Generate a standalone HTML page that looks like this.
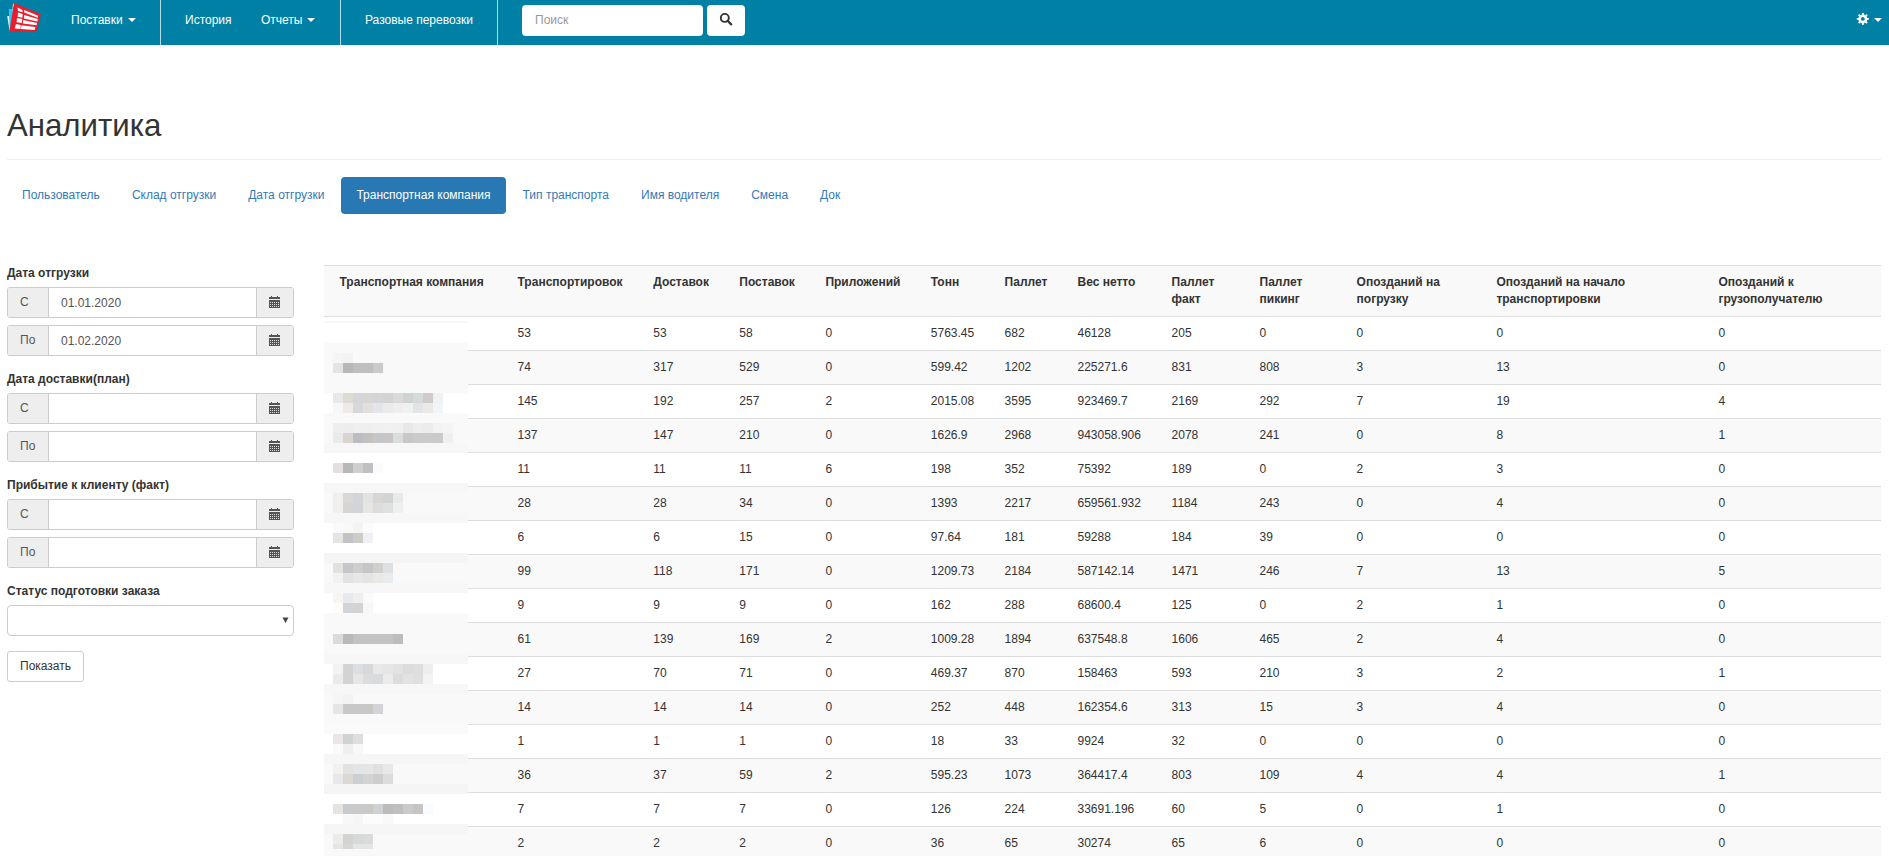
<!DOCTYPE html>
<html><head><meta charset="utf-8"><style>
*{box-sizing:border-box;}
html,body{margin:0;padding:0;background:#fff;}
body{font-family:"Liberation Sans",sans-serif;font-size:12px;line-height:17px;color:#333;width:1889px;height:856px;overflow:hidden;position:relative;}
.nav{position:absolute;left:0;top:0;width:1889px;height:45px;background:#0080a5;}
.nav .t{position:absolute;top:0;height:45px;line-height:41px;color:#fff;font-size:12px;white-space:nowrap;}
.sep{position:absolute;top:0;width:1px;height:45px;background:#b2dce7;}
.caret{display:inline-block;width:0;height:0;border-top:4px solid #fff;border-left:4px solid transparent;border-right:4px solid transparent;vertical-align:middle;margin-left:5px;position:relative;top:-1px;}
.search{position:absolute;left:522px;top:5px;width:181px;height:31px;background:#fff;border-radius:4px;color:#999;padding-left:13px;line-height:30px;font-size:12px;}
.sbtn{position:absolute;left:707px;top:5px;width:38px;height:31px;background:#fff;border-radius:4px;}
h1{position:absolute;left:7px;top:106px;margin:0;font-size:31.2px;font-weight:normal;line-height:40px;color:#333;white-space:nowrap;}
.hr{position:absolute;left:7px;top:159px;width:1874px;height:1px;background:#eee;}
.pills{position:absolute;left:7px;top:177px;height:37px;white-space:nowrap;font-size:0;}
.pill{display:inline-block;height:37px;line-height:37px;font-size:12px;color:#337ab7;padding:0 15px;border-radius:4px;margin-right:2px;}
.pill.act{background:#2878b4;color:#fff;}
.lbl{position:absolute;left:7px;font-weight:bold;white-space:nowrap;line-height:17px;}
.ig{position:absolute;left:7px;width:287px;height:31px;border:1px solid #ccc;border-radius:3px;background:#fff;}
.ig .a1{position:absolute;left:0;top:0;width:41px;height:29px;background:#eee;border-right:1px solid #ccc;border-radius:2px 0 0 2px;padding-left:12px;line-height:29px;color:#555;}
.ig .a2{position:absolute;right:0;top:0;width:37px;height:29px;background:#eee;border-left:1px solid #ccc;border-radius:0 2px 2px 0;}
.ig .v{position:absolute;left:53px;top:1px;line-height:29px;color:#555;}
.cal{position:absolute;left:12px;top:8px;}
.sel{position:absolute;left:7px;top:605px;width:287px;height:31px;border:1px solid #ccc;border-radius:4px;background:#fff;}
.btn{position:absolute;left:7px;top:651px;width:77px;height:31px;border:1px solid #ccc;border-radius:3px;background:#fff;line-height:29px;padding-left:12px;color:#333;}
.thd{position:absolute;left:324px;top:265px;width:1557px;height:52px;background:#f9f9f9;border-top:1px solid #ddd;border-bottom:1px solid #ddd;}
.row{position:absolute;left:324px;width:1557px;height:35px;border-top:1px solid #ddd;background:#fff;}
.row.s{background:#f9f9f9;}
.c{position:absolute;top:8px;line-height:17px;white-space:nowrap;}
.thd .c{font-weight:bold;}
</style></head><body>
<div class="nav"><svg style="position:absolute;left:0;top:0" width="50" height="45" viewBox="0 0 50 45">
<polygon points="7.2,16.2 10.3,15.8 10.6,30.5 9.6,30.5" fill="#f4fbfd"/>
<polygon points="8.8,8.8 14,9.6 10.2,31.2 9.8,31.2" fill="#29c8f2"/>
<polygon points="13.2,3.9 14.3,3.2 12.5,12 12.6,6" fill="#d9f3fa"/>
<polygon points="14.1,3.1 40.7,13.9 36.1,32.1 9.4,31.4" fill="#ec1c2c"/>
<polygon points="17.5,7.6 22.5,9.9 22.5,12.2 18.1,10.9" fill="#fff"/>
<polygon points="17.9,12.6 22.7,14.1 22.5,17.7 17.7,16.8" fill="#fff"/>
<polygon points="17,18.1 22.3,19.1 21.9,23.1 16.6,22.3" fill="#fff"/>
<polygon points="16,24 20.8,25 20.4,29 14.7,28.6" fill="#fff"/>
<polygon points="24.2,10.1 38.1,15.7 37.6,17.7 24.2,12.6" fill="#fff"/>
<polygon points="24.2,14.9 37.9,19.1 37.4,21.4 24,18.4" fill="#fff"/>
<polygon points="23.2,20 37.1,22.9 36.6,25.2 22.9,23.5" fill="#fff"/>
<polygon points="21.5,25.2 35.3,26.9 34.7,30 20.8,29" fill="#fff"/>
</svg>
<div class="t" style="left:71px">Поставки<span class="caret"></span></div>
<div class="sep" style="left:160px"></div>
<div class="t" style="left:185px">История</div>
<div class="t" style="left:261px">Отчеты<span class="caret"></span></div>
<div class="sep" style="left:340px"></div>
<div class="t" style="left:365px">Разовые перевозки</div>
<div class="sep" style="left:497px"></div>
<div class="search">Поиск</div>
<div class="sbtn"><svg style="position:absolute;left:0;top:0" width="38" height="31" viewBox="0 0 38 31"><circle cx="17.8" cy="12.9" r="4" fill="none" stroke="#333" stroke-width="1.9"/><line x1="20.6" y1="15.8" x2="24.2" y2="19.4" stroke="#333" stroke-width="2.2" stroke-linecap="round"/></svg></div><svg style="position:absolute;left:1850px;top:7px" width="24" height="24" viewBox="-12 -12 24 24"><g transform="translate(0.85,-0.1)"><circle r="4.5" fill="#fff"/><rect x="-0.9" y="-6" width="1.8" height="3" transform="rotate(0)" fill="#fff"/><rect x="-0.9" y="-6" width="1.8" height="3" transform="rotate(45)" fill="#fff"/><rect x="-0.9" y="-6" width="1.8" height="3" transform="rotate(90)" fill="#fff"/><rect x="-0.9" y="-6" width="1.8" height="3" transform="rotate(135)" fill="#fff"/><rect x="-0.9" y="-6" width="1.8" height="3" transform="rotate(180)" fill="#fff"/><rect x="-0.9" y="-6" width="1.8" height="3" transform="rotate(225)" fill="#fff"/><rect x="-0.9" y="-6" width="1.8" height="3" transform="rotate(270)" fill="#fff"/><rect x="-0.9" y="-6" width="1.8" height="3" transform="rotate(315)" fill="#fff"/><circle r="1.9" fill="#0080a5"/></g></svg><span class="caret" style="position:absolute;left:1874px;top:18px;margin:0;vertical-align:top"></span>
</div>
<h1>Аналитика</h1><div class="hr"></div>
<div class="pills"><span class="pill">Пользователь</span><span class="pill">Склад отгрузки</span><span class="pill">Дата отгрузки</span><span class="pill act">Транспортная компания</span><span class="pill">Тип транспорта</span><span class="pill">Имя водителя</span><span class="pill">Смена</span><span class="pill">Док</span></div>
<div class="lbl" style="top:265px">Дата отгрузки</div>
<div class="ig" style="top:287px"><div class="a1">С</div><div class="v">01.01.2020</div><div class="a2"><svg class="cal" width="11" height="12" viewBox="0 0 11 12" shape-rendering="crispEdges"><rect x="2" y="0" width="1" height="1" fill="#555"/><rect x="8" y="0" width="1" height="1" fill="#555"/><rect x="0" y="1" width="11" height="2" fill="#555"/><rect x="0" y="4" width="11" height="8" fill="#555"/><rect x="1" y="6" width="1" height="1" fill="#d8d8d8"/><rect x="3" y="6" width="1" height="1" fill="#d8d8d8"/><rect x="5" y="6" width="1" height="1" fill="#d8d8d8"/><rect x="7" y="6" width="1" height="1" fill="#d8d8d8"/><rect x="9" y="6" width="1" height="1" fill="#d8d8d8"/><rect x="1" y="8" width="1" height="1" fill="#d8d8d8"/><rect x="3" y="8" width="1" height="1" fill="#d8d8d8"/><rect x="5" y="8" width="1" height="1" fill="#d8d8d8"/><rect x="7" y="8" width="1" height="1" fill="#d8d8d8"/><rect x="9" y="8" width="1" height="1" fill="#d8d8d8"/><rect x="1" y="10" width="1" height="1" fill="#d8d8d8"/><rect x="3" y="10" width="1" height="1" fill="#d8d8d8"/><rect x="5" y="10" width="1" height="1" fill="#d8d8d8"/><rect x="7" y="10" width="1" height="1" fill="#d8d8d8"/><rect x="9" y="10" width="1" height="1" fill="#d8d8d8"/></svg></div></div>
<div class="ig" style="top:325px"><div class="a1">По</div><div class="v">01.02.2020</div><div class="a2"><svg class="cal" width="11" height="12" viewBox="0 0 11 12" shape-rendering="crispEdges"><rect x="2" y="0" width="1" height="1" fill="#555"/><rect x="8" y="0" width="1" height="1" fill="#555"/><rect x="0" y="1" width="11" height="2" fill="#555"/><rect x="0" y="4" width="11" height="8" fill="#555"/><rect x="1" y="6" width="1" height="1" fill="#d8d8d8"/><rect x="3" y="6" width="1" height="1" fill="#d8d8d8"/><rect x="5" y="6" width="1" height="1" fill="#d8d8d8"/><rect x="7" y="6" width="1" height="1" fill="#d8d8d8"/><rect x="9" y="6" width="1" height="1" fill="#d8d8d8"/><rect x="1" y="8" width="1" height="1" fill="#d8d8d8"/><rect x="3" y="8" width="1" height="1" fill="#d8d8d8"/><rect x="5" y="8" width="1" height="1" fill="#d8d8d8"/><rect x="7" y="8" width="1" height="1" fill="#d8d8d8"/><rect x="9" y="8" width="1" height="1" fill="#d8d8d8"/><rect x="1" y="10" width="1" height="1" fill="#d8d8d8"/><rect x="3" y="10" width="1" height="1" fill="#d8d8d8"/><rect x="5" y="10" width="1" height="1" fill="#d8d8d8"/><rect x="7" y="10" width="1" height="1" fill="#d8d8d8"/><rect x="9" y="10" width="1" height="1" fill="#d8d8d8"/></svg></div></div>
<div class="lbl" style="top:371px">Дата доставки(план)</div>
<div class="ig" style="top:393px"><div class="a1">С</div><div class="v"></div><div class="a2"><svg class="cal" width="11" height="12" viewBox="0 0 11 12" shape-rendering="crispEdges"><rect x="2" y="0" width="1" height="1" fill="#555"/><rect x="8" y="0" width="1" height="1" fill="#555"/><rect x="0" y="1" width="11" height="2" fill="#555"/><rect x="0" y="4" width="11" height="8" fill="#555"/><rect x="1" y="6" width="1" height="1" fill="#d8d8d8"/><rect x="3" y="6" width="1" height="1" fill="#d8d8d8"/><rect x="5" y="6" width="1" height="1" fill="#d8d8d8"/><rect x="7" y="6" width="1" height="1" fill="#d8d8d8"/><rect x="9" y="6" width="1" height="1" fill="#d8d8d8"/><rect x="1" y="8" width="1" height="1" fill="#d8d8d8"/><rect x="3" y="8" width="1" height="1" fill="#d8d8d8"/><rect x="5" y="8" width="1" height="1" fill="#d8d8d8"/><rect x="7" y="8" width="1" height="1" fill="#d8d8d8"/><rect x="9" y="8" width="1" height="1" fill="#d8d8d8"/><rect x="1" y="10" width="1" height="1" fill="#d8d8d8"/><rect x="3" y="10" width="1" height="1" fill="#d8d8d8"/><rect x="5" y="10" width="1" height="1" fill="#d8d8d8"/><rect x="7" y="10" width="1" height="1" fill="#d8d8d8"/><rect x="9" y="10" width="1" height="1" fill="#d8d8d8"/></svg></div></div>
<div class="ig" style="top:431px"><div class="a1">По</div><div class="v"></div><div class="a2"><svg class="cal" width="11" height="12" viewBox="0 0 11 12" shape-rendering="crispEdges"><rect x="2" y="0" width="1" height="1" fill="#555"/><rect x="8" y="0" width="1" height="1" fill="#555"/><rect x="0" y="1" width="11" height="2" fill="#555"/><rect x="0" y="4" width="11" height="8" fill="#555"/><rect x="1" y="6" width="1" height="1" fill="#d8d8d8"/><rect x="3" y="6" width="1" height="1" fill="#d8d8d8"/><rect x="5" y="6" width="1" height="1" fill="#d8d8d8"/><rect x="7" y="6" width="1" height="1" fill="#d8d8d8"/><rect x="9" y="6" width="1" height="1" fill="#d8d8d8"/><rect x="1" y="8" width="1" height="1" fill="#d8d8d8"/><rect x="3" y="8" width="1" height="1" fill="#d8d8d8"/><rect x="5" y="8" width="1" height="1" fill="#d8d8d8"/><rect x="7" y="8" width="1" height="1" fill="#d8d8d8"/><rect x="9" y="8" width="1" height="1" fill="#d8d8d8"/><rect x="1" y="10" width="1" height="1" fill="#d8d8d8"/><rect x="3" y="10" width="1" height="1" fill="#d8d8d8"/><rect x="5" y="10" width="1" height="1" fill="#d8d8d8"/><rect x="7" y="10" width="1" height="1" fill="#d8d8d8"/><rect x="9" y="10" width="1" height="1" fill="#d8d8d8"/></svg></div></div>
<div class="lbl" style="top:477px">Прибытие к клиенту (факт)</div>
<div class="ig" style="top:499px"><div class="a1">С</div><div class="v"></div><div class="a2"><svg class="cal" width="11" height="12" viewBox="0 0 11 12" shape-rendering="crispEdges"><rect x="2" y="0" width="1" height="1" fill="#555"/><rect x="8" y="0" width="1" height="1" fill="#555"/><rect x="0" y="1" width="11" height="2" fill="#555"/><rect x="0" y="4" width="11" height="8" fill="#555"/><rect x="1" y="6" width="1" height="1" fill="#d8d8d8"/><rect x="3" y="6" width="1" height="1" fill="#d8d8d8"/><rect x="5" y="6" width="1" height="1" fill="#d8d8d8"/><rect x="7" y="6" width="1" height="1" fill="#d8d8d8"/><rect x="9" y="6" width="1" height="1" fill="#d8d8d8"/><rect x="1" y="8" width="1" height="1" fill="#d8d8d8"/><rect x="3" y="8" width="1" height="1" fill="#d8d8d8"/><rect x="5" y="8" width="1" height="1" fill="#d8d8d8"/><rect x="7" y="8" width="1" height="1" fill="#d8d8d8"/><rect x="9" y="8" width="1" height="1" fill="#d8d8d8"/><rect x="1" y="10" width="1" height="1" fill="#d8d8d8"/><rect x="3" y="10" width="1" height="1" fill="#d8d8d8"/><rect x="5" y="10" width="1" height="1" fill="#d8d8d8"/><rect x="7" y="10" width="1" height="1" fill="#d8d8d8"/><rect x="9" y="10" width="1" height="1" fill="#d8d8d8"/></svg></div></div>
<div class="ig" style="top:537px"><div class="a1">По</div><div class="v"></div><div class="a2"><svg class="cal" width="11" height="12" viewBox="0 0 11 12" shape-rendering="crispEdges"><rect x="2" y="0" width="1" height="1" fill="#555"/><rect x="8" y="0" width="1" height="1" fill="#555"/><rect x="0" y="1" width="11" height="2" fill="#555"/><rect x="0" y="4" width="11" height="8" fill="#555"/><rect x="1" y="6" width="1" height="1" fill="#d8d8d8"/><rect x="3" y="6" width="1" height="1" fill="#d8d8d8"/><rect x="5" y="6" width="1" height="1" fill="#d8d8d8"/><rect x="7" y="6" width="1" height="1" fill="#d8d8d8"/><rect x="9" y="6" width="1" height="1" fill="#d8d8d8"/><rect x="1" y="8" width="1" height="1" fill="#d8d8d8"/><rect x="3" y="8" width="1" height="1" fill="#d8d8d8"/><rect x="5" y="8" width="1" height="1" fill="#d8d8d8"/><rect x="7" y="8" width="1" height="1" fill="#d8d8d8"/><rect x="9" y="8" width="1" height="1" fill="#d8d8d8"/><rect x="1" y="10" width="1" height="1" fill="#d8d8d8"/><rect x="3" y="10" width="1" height="1" fill="#d8d8d8"/><rect x="5" y="10" width="1" height="1" fill="#d8d8d8"/><rect x="7" y="10" width="1" height="1" fill="#d8d8d8"/><rect x="9" y="10" width="1" height="1" fill="#d8d8d8"/></svg></div></div>
<div class="lbl" style="top:583px">Статус подготовки заказа</div>
<div class="sel"><svg style="position:absolute;left:274px;top:11px" width="7" height="7" viewBox="0 0 7 7"><polygon points="0.5,0.5 6.5,0.5 3.5,6" fill="#444"/></svg></div>
<div class="btn">Показать</div>
<div class="thd"><div class="c" style="left:15.5px">Транспортная компания</div><div class="c" style="left:193.5px">Транспортировок</div><div class="c" style="left:329.3px">Доставок</div><div class="c" style="left:415.3px">Поставок</div><div class="c" style="left:501.4px">Приложений</div><div class="c" style="left:606.8px">Тонн</div><div class="c" style="left:680.6px">Паллет</div><div class="c" style="left:753.5px">Вес нетто</div><div class="c" style="left:847.6px">Паллет<br>факт</div><div class="c" style="left:935.5px">Паллет<br>пикинг</div><div class="c" style="left:1032.6px">Опозданий на<br>погрузку</div><div class="c" style="left:1172.4px">Опозданий на начало<br>транспортировки</div><div class="c" style="left:1394.4px">Опозданий к<br>грузополучателю</div></div>
<div class="row" style="top:316px"><div class="c" style="left:193.5px">53</div><div class="c" style="left:329.3px">53</div><div class="c" style="left:415.3px">58</div><div class="c" style="left:501.4px">0</div><div class="c" style="left:606.8px">5763.45</div><div class="c" style="left:680.6px">682</div><div class="c" style="left:753.5px">46128</div><div class="c" style="left:847.6px">205</div><div class="c" style="left:935.5px">0</div><div class="c" style="left:1032.6px">0</div><div class="c" style="left:1172.4px">0</div><div class="c" style="left:1394.4px">0</div></div>
<div class="row s" style="top:350px"><div class="c" style="left:193.5px">74</div><div class="c" style="left:329.3px">317</div><div class="c" style="left:415.3px">529</div><div class="c" style="left:501.4px">0</div><div class="c" style="left:606.8px">599.42</div><div class="c" style="left:680.6px">1202</div><div class="c" style="left:753.5px">225271.6</div><div class="c" style="left:847.6px">831</div><div class="c" style="left:935.5px">808</div><div class="c" style="left:1032.6px">3</div><div class="c" style="left:1172.4px">13</div><div class="c" style="left:1394.4px">0</div></div>
<div class="row" style="top:384px"><div class="c" style="left:193.5px">145</div><div class="c" style="left:329.3px">192</div><div class="c" style="left:415.3px">257</div><div class="c" style="left:501.4px">2</div><div class="c" style="left:606.8px">2015.08</div><div class="c" style="left:680.6px">3595</div><div class="c" style="left:753.5px">923469.7</div><div class="c" style="left:847.6px">2169</div><div class="c" style="left:935.5px">292</div><div class="c" style="left:1032.6px">7</div><div class="c" style="left:1172.4px">19</div><div class="c" style="left:1394.4px">4</div></div>
<div class="row s" style="top:418px"><div class="c" style="left:193.5px">137</div><div class="c" style="left:329.3px">147</div><div class="c" style="left:415.3px">210</div><div class="c" style="left:501.4px">0</div><div class="c" style="left:606.8px">1626.9</div><div class="c" style="left:680.6px">2968</div><div class="c" style="left:753.5px">943058.906</div><div class="c" style="left:847.6px">2078</div><div class="c" style="left:935.5px">241</div><div class="c" style="left:1032.6px">0</div><div class="c" style="left:1172.4px">8</div><div class="c" style="left:1394.4px">1</div></div>
<div class="row" style="top:452px"><div class="c" style="left:193.5px">11</div><div class="c" style="left:329.3px">11</div><div class="c" style="left:415.3px">11</div><div class="c" style="left:501.4px">6</div><div class="c" style="left:606.8px">198</div><div class="c" style="left:680.6px">352</div><div class="c" style="left:753.5px">75392</div><div class="c" style="left:847.6px">189</div><div class="c" style="left:935.5px">0</div><div class="c" style="left:1032.6px">2</div><div class="c" style="left:1172.4px">3</div><div class="c" style="left:1394.4px">0</div></div>
<div class="row s" style="top:486px"><div class="c" style="left:193.5px">28</div><div class="c" style="left:329.3px">28</div><div class="c" style="left:415.3px">34</div><div class="c" style="left:501.4px">0</div><div class="c" style="left:606.8px">1393</div><div class="c" style="left:680.6px">2217</div><div class="c" style="left:753.5px">659561.932</div><div class="c" style="left:847.6px">1184</div><div class="c" style="left:935.5px">243</div><div class="c" style="left:1032.6px">0</div><div class="c" style="left:1172.4px">4</div><div class="c" style="left:1394.4px">0</div></div>
<div class="row" style="top:520px"><div class="c" style="left:193.5px">6</div><div class="c" style="left:329.3px">6</div><div class="c" style="left:415.3px">15</div><div class="c" style="left:501.4px">0</div><div class="c" style="left:606.8px">97.64</div><div class="c" style="left:680.6px">181</div><div class="c" style="left:753.5px">59288</div><div class="c" style="left:847.6px">184</div><div class="c" style="left:935.5px">39</div><div class="c" style="left:1032.6px">0</div><div class="c" style="left:1172.4px">0</div><div class="c" style="left:1394.4px">0</div></div>
<div class="row s" style="top:554px"><div class="c" style="left:193.5px">99</div><div class="c" style="left:329.3px">118</div><div class="c" style="left:415.3px">171</div><div class="c" style="left:501.4px">0</div><div class="c" style="left:606.8px">1209.73</div><div class="c" style="left:680.6px">2184</div><div class="c" style="left:753.5px">587142.14</div><div class="c" style="left:847.6px">1471</div><div class="c" style="left:935.5px">246</div><div class="c" style="left:1032.6px">7</div><div class="c" style="left:1172.4px">13</div><div class="c" style="left:1394.4px">5</div></div>
<div class="row" style="top:588px"><div class="c" style="left:193.5px">9</div><div class="c" style="left:329.3px">9</div><div class="c" style="left:415.3px">9</div><div class="c" style="left:501.4px">0</div><div class="c" style="left:606.8px">162</div><div class="c" style="left:680.6px">288</div><div class="c" style="left:753.5px">68600.4</div><div class="c" style="left:847.6px">125</div><div class="c" style="left:935.5px">0</div><div class="c" style="left:1032.6px">2</div><div class="c" style="left:1172.4px">1</div><div class="c" style="left:1394.4px">0</div></div>
<div class="row s" style="top:622px"><div class="c" style="left:193.5px">61</div><div class="c" style="left:329.3px">139</div><div class="c" style="left:415.3px">169</div><div class="c" style="left:501.4px">2</div><div class="c" style="left:606.8px">1009.28</div><div class="c" style="left:680.6px">1894</div><div class="c" style="left:753.5px">637548.8</div><div class="c" style="left:847.6px">1606</div><div class="c" style="left:935.5px">465</div><div class="c" style="left:1032.6px">2</div><div class="c" style="left:1172.4px">4</div><div class="c" style="left:1394.4px">0</div></div>
<div class="row" style="top:656px"><div class="c" style="left:193.5px">27</div><div class="c" style="left:329.3px">70</div><div class="c" style="left:415.3px">71</div><div class="c" style="left:501.4px">0</div><div class="c" style="left:606.8px">469.37</div><div class="c" style="left:680.6px">870</div><div class="c" style="left:753.5px">158463</div><div class="c" style="left:847.6px">593</div><div class="c" style="left:935.5px">210</div><div class="c" style="left:1032.6px">3</div><div class="c" style="left:1172.4px">2</div><div class="c" style="left:1394.4px">1</div></div>
<div class="row s" style="top:690px"><div class="c" style="left:193.5px">14</div><div class="c" style="left:329.3px">14</div><div class="c" style="left:415.3px">14</div><div class="c" style="left:501.4px">0</div><div class="c" style="left:606.8px">252</div><div class="c" style="left:680.6px">448</div><div class="c" style="left:753.5px">162354.6</div><div class="c" style="left:847.6px">313</div><div class="c" style="left:935.5px">15</div><div class="c" style="left:1032.6px">3</div><div class="c" style="left:1172.4px">4</div><div class="c" style="left:1394.4px">0</div></div>
<div class="row" style="top:724px"><div class="c" style="left:193.5px">1</div><div class="c" style="left:329.3px">1</div><div class="c" style="left:415.3px">1</div><div class="c" style="left:501.4px">0</div><div class="c" style="left:606.8px">18</div><div class="c" style="left:680.6px">33</div><div class="c" style="left:753.5px">9924</div><div class="c" style="left:847.6px">32</div><div class="c" style="left:935.5px">0</div><div class="c" style="left:1032.6px">0</div><div class="c" style="left:1172.4px">0</div><div class="c" style="left:1394.4px">0</div></div>
<div class="row s" style="top:758px"><div class="c" style="left:193.5px">36</div><div class="c" style="left:329.3px">37</div><div class="c" style="left:415.3px">59</div><div class="c" style="left:501.4px">2</div><div class="c" style="left:606.8px">595.23</div><div class="c" style="left:680.6px">1073</div><div class="c" style="left:753.5px">364417.4</div><div class="c" style="left:847.6px">803</div><div class="c" style="left:935.5px">109</div><div class="c" style="left:1032.6px">4</div><div class="c" style="left:1172.4px">4</div><div class="c" style="left:1394.4px">1</div></div>
<div class="row" style="top:792px"><div class="c" style="left:193.5px">7</div><div class="c" style="left:329.3px">7</div><div class="c" style="left:415.3px">7</div><div class="c" style="left:501.4px">0</div><div class="c" style="left:606.8px">126</div><div class="c" style="left:680.6px">224</div><div class="c" style="left:753.5px">33691.196</div><div class="c" style="left:847.6px">60</div><div class="c" style="left:935.5px">5</div><div class="c" style="left:1032.6px">0</div><div class="c" style="left:1172.4px">1</div><div class="c" style="left:1394.4px">0</div></div>
<div class="row s" style="top:826px"><div class="c" style="left:193.5px">2</div><div class="c" style="left:329.3px">2</div><div class="c" style="left:415.3px">2</div><div class="c" style="left:501.4px">0</div><div class="c" style="left:606.8px">36</div><div class="c" style="left:680.6px">65</div><div class="c" style="left:753.5px">30274</div><div class="c" style="left:847.6px">65</div><div class="c" style="left:935.5px">6</div><div class="c" style="left:1032.6px">0</div><div class="c" style="left:1172.4px">0</div><div class="c" style="left:1394.4px">0</div></div>
<div style="position:absolute;left:324px;top:0;width:144px;height:856px;"><div style="position:absolute;left:0;top:316px;width:144px;height:1px;background:#dddddd"></div><div style="position:absolute;left:0;top:317px;width:144px;height:4px;background:#ffffff"></div><div style="position:absolute;left:0;top:321px;width:144px;height:2px;background:#f9f9f9"></div><div style="position:absolute;left:0;top:323px;width:144px;height:20px;background:#ffffff"></div><div style="position:absolute;left:0;top:343px;width:144px;height:50px;background:#f9f9f9"></div><div style="position:absolute;left:0;top:393px;width:144px;height:20px;background:#ffffff"></div><div style="position:absolute;left:0;top:413px;width:144px;height:30px;background:#f9f9f9"></div><div style="position:absolute;left:0;top:443px;width:144px;height:10px;background:#f7f7f7"></div><div style="position:absolute;left:0;top:453px;width:144px;height:30px;background:#ffffff"></div><div style="position:absolute;left:0;top:483px;width:144px;height:10px;background:#f7f7f7"></div><div style="position:absolute;left:0;top:493px;width:144px;height:20px;background:#f9f9f9"></div><div style="position:absolute;left:0;top:513px;width:144px;height:10px;background:#f7f7f7"></div><div style="position:absolute;left:0;top:523px;width:144px;height:30px;background:#ffffff"></div><div style="position:absolute;left:0;top:553px;width:144px;height:10px;background:#f5f5f5"></div><div style="position:absolute;left:0;top:563px;width:144px;height:20px;background:#f9f9f9"></div><div style="position:absolute;left:0;top:583px;width:144px;height:10px;background:#f7f7f7"></div><div style="position:absolute;left:0;top:593px;width:144px;height:20px;background:#ffffff"></div><div style="position:absolute;left:0;top:613px;width:144px;height:41px;background:#f9f9f9"></div><div style="position:absolute;left:0;top:654px;width:144px;height:10px;background:#f7f7f7"></div><div style="position:absolute;left:0;top:664px;width:144px;height:20px;background:#ffffff"></div><div style="position:absolute;left:0;top:684px;width:144px;height:10px;background:#f7f7f7"></div><div style="position:absolute;left:0;top:694px;width:144px;height:30px;background:#f9f9f9"></div><div style="position:absolute;left:0;top:724px;width:144px;height:10px;background:#fafafa"></div><div style="position:absolute;left:0;top:734px;width:144px;height:20px;background:#ffffff"></div><div style="position:absolute;left:0;top:754px;width:144px;height:10px;background:#f6f6f6"></div><div style="position:absolute;left:0;top:764px;width:144px;height:20px;background:#f9f9f9"></div><div style="position:absolute;left:0;top:784px;width:144px;height:10px;background:#f5f5f5"></div><div style="position:absolute;left:0;top:794px;width:144px;height:30px;background:#ffffff"></div><div style="position:absolute;left:0;top:824px;width:144px;height:10px;background:#f6f6f6"></div><div style="position:absolute;left:0;top:834px;width:144px;height:22px;background:#f9f9f9"></div><div style="position:absolute;left:9px;top:353px;width:10px;height:10px;background:#f5f5f5"></div><div style="position:absolute;left:19px;top:353px;width:10px;height:10px;background:#f3f3f3"></div><div style="position:absolute;left:9px;top:363px;width:10px;height:10px;background:#e6e4e2"></div><div style="position:absolute;left:19px;top:363px;width:10px;height:10px;background:#b8b8b8"></div><div style="position:absolute;left:29px;top:363px;width:10px;height:10px;background:#bfbfbf"></div><div style="position:absolute;left:39px;top:363px;width:10px;height:10px;background:#c0bfbd"></div><div style="position:absolute;left:49px;top:363px;width:10px;height:10px;background:#c8cbce"></div><div style="position:absolute;left:9px;top:393px;width:10px;height:10px;background:#e8e8e8"></div><div style="position:absolute;left:19px;top:393px;width:10px;height:10px;background:#dedbd7"></div><div style="position:absolute;left:29px;top:393px;width:10px;height:10px;background:#d5d6d9"></div><div style="position:absolute;left:39px;top:393px;width:10px;height:10px;background:#d8d5d3"></div><div style="position:absolute;left:49px;top:393px;width:10px;height:10px;background:#d5d5d8"></div><div style="position:absolute;left:59px;top:393px;width:10px;height:10px;background:#d3d3d3"></div><div style="position:absolute;left:69px;top:393px;width:10px;height:10px;background:#dcd9d8"></div><div style="position:absolute;left:79px;top:393px;width:10px;height:10px;background:#ced3d5"></div><div style="position:absolute;left:89px;top:393px;width:10px;height:10px;background:#d8dad9"></div><div style="position:absolute;left:99px;top:393px;width:10px;height:10px;background:#cfcbc8"></div><div style="position:absolute;left:109px;top:393px;width:10px;height:10px;background:#eef2f5"></div><div style="position:absolute;left:9px;top:403px;width:10px;height:10px;background:#f7f7f7"></div><div style="position:absolute;left:19px;top:403px;width:10px;height:10px;background:#eeece8"></div><div style="position:absolute;left:29px;top:403px;width:10px;height:10px;background:#d6d8dc"></div><div style="position:absolute;left:39px;top:403px;width:10px;height:10px;background:#e2e0dd"></div><div style="position:absolute;left:49px;top:403px;width:10px;height:10px;background:#e3e5ea"></div><div style="position:absolute;left:59px;top:403px;width:10px;height:10px;background:#ebebeb"></div><div style="position:absolute;left:69px;top:403px;width:10px;height:10px;background:#eeeeee"></div><div style="position:absolute;left:79px;top:403px;width:10px;height:10px;background:#f1f1f1"></div><div style="position:absolute;left:89px;top:403px;width:10px;height:10px;background:#e2e5e5"></div><div style="position:absolute;left:99px;top:403px;width:10px;height:10px;background:#ebe9e7"></div><div style="position:absolute;left:109px;top:403px;width:10px;height:10px;background:#f2f4f6"></div><div style="position:absolute;left:9px;top:423px;width:10px;height:10px;background:#eeeeee"></div><div style="position:absolute;left:19px;top:423px;width:10px;height:10px;background:#eceeed"></div><div style="position:absolute;left:29px;top:423px;width:10px;height:10px;background:#efefef"></div><div style="position:absolute;left:39px;top:423px;width:10px;height:10px;background:#efefef"></div><div style="position:absolute;left:49px;top:423px;width:10px;height:10px;background:#f0f0f0"></div><div style="position:absolute;left:59px;top:423px;width:10px;height:10px;background:#f1f1f1"></div><div style="position:absolute;left:69px;top:423px;width:10px;height:10px;background:#f0f0f0"></div><div style="position:absolute;left:79px;top:423px;width:10px;height:10px;background:#e6e8ea"></div><div style="position:absolute;left:89px;top:423px;width:10px;height:10px;background:#eeeeec"></div><div style="position:absolute;left:99px;top:423px;width:10px;height:10px;background:#ececec"></div><div style="position:absolute;left:109px;top:423px;width:10px;height:10px;background:#f3f3f3"></div><div style="position:absolute;left:119px;top:423px;width:10px;height:10px;background:#f5f5f5"></div><div style="position:absolute;left:9px;top:433px;width:10px;height:10px;background:#eaeaea"></div><div style="position:absolute;left:19px;top:433px;width:10px;height:10px;background:#d8d5cf"></div><div style="position:absolute;left:29px;top:433px;width:10px;height:10px;background:#bcbdc2"></div><div style="position:absolute;left:39px;top:433px;width:10px;height:10px;background:#c3c1bd"></div><div style="position:absolute;left:49px;top:433px;width:10px;height:10px;background:#c4c6ca"></div><div style="position:absolute;left:59px;top:433px;width:10px;height:10px;background:#c8c6c6"></div><div style="position:absolute;left:69px;top:433px;width:10px;height:10px;background:#dbdcde"></div><div style="position:absolute;left:79px;top:433px;width:10px;height:10px;background:#c8c8c8"></div><div style="position:absolute;left:89px;top:433px;width:10px;height:10px;background:#cacaca"></div><div style="position:absolute;left:99px;top:433px;width:10px;height:10px;background:#cbcbcb"></div><div style="position:absolute;left:109px;top:433px;width:10px;height:10px;background:#cacaca"></div><div style="position:absolute;left:119px;top:433px;width:10px;height:10px;background:#eff0f2"></div><div style="position:absolute;left:9px;top:463px;width:10px;height:10px;background:#e3e0df"></div><div style="position:absolute;left:19px;top:463px;width:10px;height:10px;background:#b8b8b8"></div><div style="position:absolute;left:29px;top:463px;width:10px;height:10px;background:#cfcfcd"></div><div style="position:absolute;left:39px;top:463px;width:10px;height:10px;background:#bfc0c4"></div><div style="position:absolute;left:49px;top:463px;width:10px;height:10px;background:#fbfbfb"></div><div style="position:absolute;left:9px;top:493px;width:10px;height:10px;background:#f0efed"></div><div style="position:absolute;left:19px;top:493px;width:10px;height:10px;background:#d8d8d8"></div><div style="position:absolute;left:29px;top:493px;width:10px;height:10px;background:#d3d4d8"></div><div style="position:absolute;left:39px;top:493px;width:10px;height:10px;background:#e2e4e3"></div><div style="position:absolute;left:49px;top:493px;width:10px;height:10px;background:#d8d5d3"></div><div style="position:absolute;left:59px;top:493px;width:10px;height:10px;background:#d3d3d5"></div><div style="position:absolute;left:69px;top:493px;width:10px;height:10px;background:#e8eaea"></div><div style="position:absolute;left:9px;top:503px;width:10px;height:10px;background:#efefed"></div><div style="position:absolute;left:19px;top:503px;width:10px;height:10px;background:#d6d5d3"></div><div style="position:absolute;left:29px;top:503px;width:10px;height:10px;background:#d3d4d8"></div><div style="position:absolute;left:39px;top:503px;width:10px;height:10px;background:#e8e6e3"></div><div style="position:absolute;left:49px;top:503px;width:10px;height:10px;background:#dcdcdc"></div><div style="position:absolute;left:59px;top:503px;width:10px;height:10px;background:#dfe0e0"></div><div style="position:absolute;left:69px;top:503px;width:10px;height:10px;background:#eef0f0"></div><div style="position:absolute;left:9px;top:523px;width:10px;height:10px;background:#fafafa"></div><div style="position:absolute;left:19px;top:523px;width:10px;height:10px;background:#f8f8f5"></div><div style="position:absolute;left:29px;top:523px;width:10px;height:10px;background:#f3f5f4"></div><div style="position:absolute;left:39px;top:523px;width:10px;height:10px;background:#fcfcfc"></div><div style="position:absolute;left:9px;top:533px;width:10px;height:10px;background:#e6e5e3"></div><div style="position:absolute;left:19px;top:533px;width:10px;height:10px;background:#c3c3c5"></div><div style="position:absolute;left:29px;top:533px;width:10px;height:10px;background:#cdccc9"></div><div style="position:absolute;left:39px;top:533px;width:10px;height:10px;background:#eff0f3"></div><div style="position:absolute;left:9px;top:563px;width:10px;height:10px;background:#e2e1df"></div><div style="position:absolute;left:19px;top:563px;width:10px;height:10px;background:#c6c6c8"></div><div style="position:absolute;left:29px;top:563px;width:10px;height:10px;background:#cececc"></div><div style="position:absolute;left:39px;top:563px;width:10px;height:10px;background:#c6c6c7"></div><div style="position:absolute;left:49px;top:563px;width:10px;height:10px;background:#d1d0cd"></div><div style="position:absolute;left:59px;top:563px;width:10px;height:10px;background:#dde1e4"></div><div style="position:absolute;left:9px;top:573px;width:10px;height:10px;background:#f2f2f2"></div><div style="position:absolute;left:19px;top:573px;width:10px;height:10px;background:#e2e2e2"></div><div style="position:absolute;left:29px;top:573px;width:10px;height:10px;background:#e7e7e7"></div><div style="position:absolute;left:39px;top:573px;width:10px;height:10px;background:#e3e5e4"></div><div style="position:absolute;left:49px;top:573px;width:10px;height:10px;background:#eae9e5"></div><div style="position:absolute;left:59px;top:573px;width:10px;height:10px;background:#e8ecef"></div><div style="position:absolute;left:9px;top:593px;width:10px;height:10px;background:#f7f6f2"></div><div style="position:absolute;left:19px;top:593px;width:10px;height:10px;background:#e8e9ec"></div><div style="position:absolute;left:29px;top:593px;width:10px;height:10px;background:#efefed"></div><div style="position:absolute;left:39px;top:593px;width:10px;height:10px;background:#fbfbfb"></div><div style="position:absolute;left:9px;top:603px;width:10px;height:10px;background:#fffdf8"></div><div style="position:absolute;left:19px;top:603px;width:10px;height:10px;background:#d1d5d8"></div><div style="position:absolute;left:29px;top:603px;width:10px;height:10px;background:#d3d3d3"></div><div style="position:absolute;left:39px;top:603px;width:10px;height:10px;background:#f6f8f7"></div><div style="position:absolute;left:9px;top:634px;width:10px;height:10px;background:#dcdbd9"></div><div style="position:absolute;left:19px;top:634px;width:10px;height:10px;background:#b9b9b9"></div><div style="position:absolute;left:29px;top:634px;width:10px;height:10px;background:#c1c2c4"></div><div style="position:absolute;left:39px;top:634px;width:10px;height:10px;background:#c3c3c3"></div><div style="position:absolute;left:49px;top:634px;width:10px;height:10px;background:#c3c3c3"></div><div style="position:absolute;left:59px;top:634px;width:10px;height:10px;background:#c3c3c3"></div><div style="position:absolute;left:69px;top:634px;width:10px;height:10px;background:#bcbdbf"></div><div style="position:absolute;left:9px;top:664px;width:10px;height:10px;background:#f4f3f1"></div><div style="position:absolute;left:19px;top:664px;width:10px;height:10px;background:#d3d3d3"></div><div style="position:absolute;left:29px;top:664px;width:10px;height:10px;background:#dcdfe1"></div><div style="position:absolute;left:39px;top:664px;width:10px;height:10px;background:#d8d8d8"></div><div style="position:absolute;left:49px;top:664px;width:10px;height:10px;background:#e6e8ea"></div><div style="position:absolute;left:59px;top:664px;width:10px;height:10px;background:#e6e6e6"></div><div style="position:absolute;left:69px;top:664px;width:10px;height:10px;background:#e2e2e0"></div><div style="position:absolute;left:79px;top:664px;width:10px;height:10px;background:#dcdcdc"></div><div style="position:absolute;left:89px;top:664px;width:10px;height:10px;background:#dedede"></div><div style="position:absolute;left:99px;top:664px;width:10px;height:10px;background:#eeeeee"></div><div style="position:absolute;left:9px;top:674px;width:10px;height:10px;background:#ebebe9"></div><div style="position:absolute;left:19px;top:674px;width:10px;height:10px;background:#d3d3d3"></div><div style="position:absolute;left:29px;top:674px;width:10px;height:10px;background:#e6e6e6"></div><div style="position:absolute;left:39px;top:674px;width:10px;height:10px;background:#dcdcdc"></div><div style="position:absolute;left:49px;top:674px;width:10px;height:10px;background:#d8dadc"></div><div style="position:absolute;left:59px;top:674px;width:10px;height:10px;background:#ebebeb"></div><div style="position:absolute;left:69px;top:674px;width:10px;height:10px;background:#dcdcdc"></div><div style="position:absolute;left:79px;top:674px;width:10px;height:10px;background:#e2e2e2"></div><div style="position:absolute;left:89px;top:674px;width:10px;height:10px;background:#dfdfdd"></div><div style="position:absolute;left:99px;top:674px;width:10px;height:10px;background:#f3f3f3"></div><div style="position:absolute;left:9px;top:694px;width:10px;height:10px;background:#f8f6f4"></div><div style="position:absolute;left:19px;top:694px;width:10px;height:10px;background:#f3f3f3"></div><div style="position:absolute;left:9px;top:704px;width:10px;height:10px;background:#e6e6e4"></div><div style="position:absolute;left:19px;top:704px;width:10px;height:10px;background:#c8c8c8"></div><div style="position:absolute;left:29px;top:704px;width:10px;height:10px;background:#c8c8c8"></div><div style="position:absolute;left:39px;top:704px;width:10px;height:10px;background:#c8c9c4"></div><div style="position:absolute;left:49px;top:704px;width:10px;height:10px;background:#d3d4d9"></div><div style="position:absolute;left:9px;top:734px;width:10px;height:10px;background:#e8e7e5"></div><div style="position:absolute;left:19px;top:734px;width:10px;height:10px;background:#d0d3d3"></div><div style="position:absolute;left:29px;top:734px;width:10px;height:10px;background:#dedede"></div><div style="position:absolute;left:9px;top:744px;width:10px;height:10px;background:#fafafa"></div><div style="position:absolute;left:19px;top:744px;width:10px;height:10px;background:#efefef"></div><div style="position:absolute;left:29px;top:744px;width:10px;height:10px;background:#f7f8f7"></div><div style="position:absolute;left:9px;top:764px;width:10px;height:10px;background:#f3f1ef"></div><div style="position:absolute;left:19px;top:764px;width:10px;height:10px;background:#e2e2e2"></div><div style="position:absolute;left:29px;top:764px;width:10px;height:10px;background:#e5e5e5"></div><div style="position:absolute;left:39px;top:764px;width:10px;height:10px;background:#e5e5e5"></div><div style="position:absolute;left:49px;top:764px;width:10px;height:10px;background:#e0e0e0"></div><div style="position:absolute;left:59px;top:764px;width:10px;height:10px;background:#e8e8e8"></div><div style="position:absolute;left:9px;top:774px;width:10px;height:10px;background:#e8e8e8"></div><div style="position:absolute;left:19px;top:774px;width:10px;height:10px;background:#dcd8d3"></div><div style="position:absolute;left:29px;top:774px;width:10px;height:10px;background:#cbcfd2"></div><div style="position:absolute;left:39px;top:774px;width:10px;height:10px;background:#d3d3d3"></div><div style="position:absolute;left:49px;top:774px;width:10px;height:10px;background:#cdcdcd"></div><div style="position:absolute;left:59px;top:774px;width:10px;height:10px;background:#dcdcdc"></div><div style="position:absolute;left:9px;top:804px;width:10px;height:10px;background:#e5e4e2"></div><div style="position:absolute;left:19px;top:804px;width:10px;height:10px;background:#c8cacc"></div><div style="position:absolute;left:29px;top:804px;width:10px;height:10px;background:#cbcaca"></div><div style="position:absolute;left:39px;top:804px;width:10px;height:10px;background:#cac9c7"></div><div style="position:absolute;left:49px;top:804px;width:10px;height:10px;background:#cdd3d3"></div><div style="position:absolute;left:59px;top:804px;width:10px;height:10px;background:#bcbcbe"></div><div style="position:absolute;left:69px;top:804px;width:10px;height:10px;background:#bfbfbf"></div><div style="position:absolute;left:79px;top:804px;width:10px;height:10px;background:#cacaca"></div><div style="position:absolute;left:89px;top:804px;width:10px;height:10px;background:#c6c4c5"></div><div style="position:absolute;left:99px;top:804px;width:10px;height:10px;background:#f8fbff"></div><div style="position:absolute;left:9px;top:814px;width:10px;height:10px;background:#ffffff"></div><div style="position:absolute;left:19px;top:814px;width:10px;height:10px;background:#f8f8f8"></div><div style="position:absolute;left:29px;top:814px;width:10px;height:10px;background:#f6f6f6"></div><div style="position:absolute;left:39px;top:814px;width:10px;height:10px;background:#fcfcfc"></div><div style="position:absolute;left:49px;top:814px;width:10px;height:10px;background:#fcfcfc"></div><div style="position:absolute;left:59px;top:814px;width:10px;height:10px;background:#f9f9f9"></div><div style="position:absolute;left:9px;top:834px;width:10px;height:10px;background:#eeecea"></div><div style="position:absolute;left:19px;top:834px;width:10px;height:10px;background:#d3d3d1"></div><div style="position:absolute;left:29px;top:834px;width:10px;height:10px;background:#d8d9db"></div><div style="position:absolute;left:39px;top:834px;width:10px;height:10px;background:#dadcdb"></div><div style="position:absolute;left:9px;top:844px;width:10px;height:5px;background:#e5e5e5"></div><div style="position:absolute;left:19px;top:844px;width:10px;height:5px;background:#d6d6d6"></div><div style="position:absolute;left:29px;top:844px;width:10px;height:5px;background:#e5e5e5"></div><div style="position:absolute;left:39px;top:844px;width:10px;height:5px;background:#e4e6e5"></div></div>
</body></html>
